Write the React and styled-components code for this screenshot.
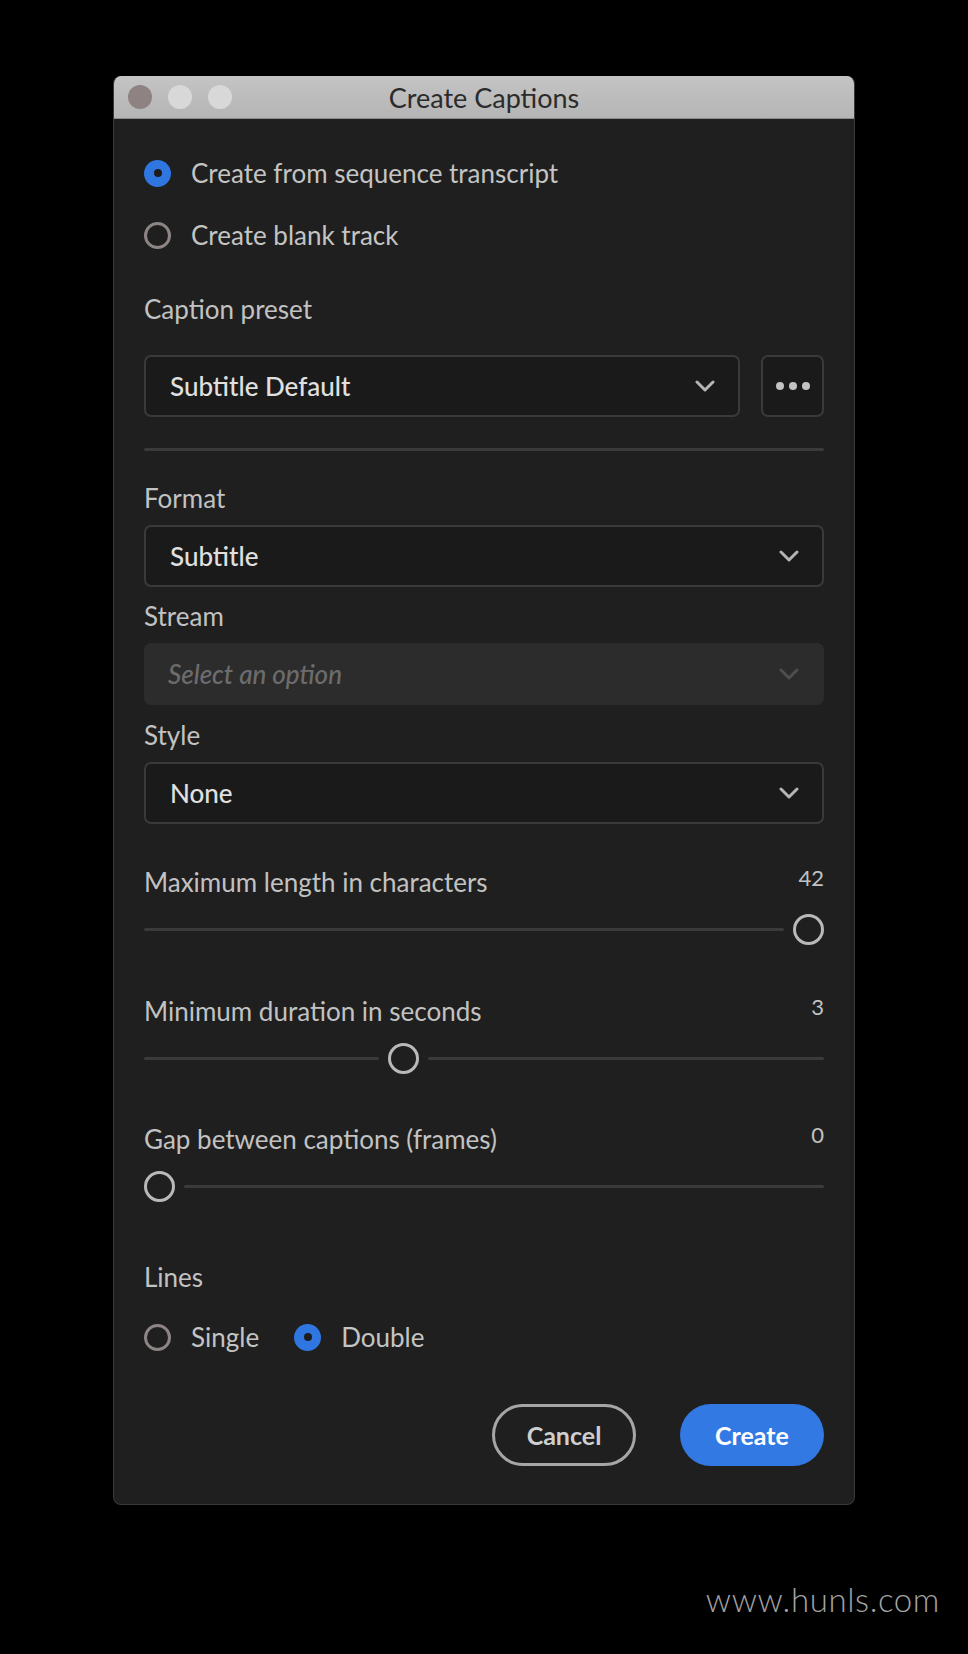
import React from "react";
import styled, { createGlobalStyle } from "styled-components";

const Global = createGlobalStyle`
  html, body { margin: 0; padding: 0; background: #000; }
  body { font-family: Lato, "Noto Sans", sans-serif; }
  * { box-sizing: border-box; }
`;

const Page = styled.div`
  width: 968px;
  min-height: 1654px;
  background: #000;
  display: flex;
  flex-direction: column;
  align-items: center;
  padding-top: 76px;
`;

const Window = styled.div`
  width: 742px;
  height: 1429px;
  display: flex;
  flex-direction: column;
  border-radius: 8px;
  overflow: hidden;
  background: #1f1f1f;
  border: 1px solid #3a3a3a;
  border-top: none;
`;

const TitleBar = styled.div`
  height: 43px;
  flex: none;
  background: linear-gradient(#c4c4c4, #b5b5b5);
  border-bottom: 1px solid #8c8c8c;
  display: grid;
  grid-template-columns: 1fr auto 1fr;
  align-items: center;
  padding: 0 14px;
`;

const Lights = styled.div`
  display: flex;
  gap: 16px;
`;

const Light = styled.span`
  width: 24px;
  height: 24px;
  border-radius: 50%;
  background: ${(p) => (p.$close ? "#8e8282" : "#d8d8d8")};
`;

const Title = styled.div`
  font-size: 27px;
  color: #2b2b2b;
  font-family: Lato, "Noto Sans", sans-serif;
`;

const Body = styled.div`
  flex: 1;
  display: flex;
  flex-direction: column;
  padding: 34px 30px 0 30px;
`;

const RadioRow = styled.div`
  display: flex;
  align-items: center;
  height: 40px;
  flex: none;
  margin-top: ${(p) => p.$mt || 0}px;
`;

const RadioItem = styled.div`
  display: flex;
  align-items: center;
  gap: 20px;
  margin-right: ${(p) => p.$mr || 0}px;
`;

const RadioDot = styled.span`
  width: 27px;
  height: 27px;
  border-radius: 50%;
  flex: none;
  display: flex;
  align-items: center;
  justify-content: center;
  background: ${(p) => (p.$on ? "#2f76e0" : "transparent")};
  border: ${(p) => (p.$on ? "none" : "3px solid #8d8484")};
  &::after {
    content: "";
    display: ${(p) => (p.$on ? "block" : "none")};
    width: 8px;
    height: 8px;
    border-radius: 50%;
    background: #1c1c1c;
  }
`;

const RadioText = styled.span`
  font-size: 26px;
  color: #c4c4c4;
  line-height: 34px;
`;

const Label = styled.div`
  font-size: 26px;
  line-height: 34px;
  color: #c2c2c2;
  flex: none;
  margin-top: ${(p) => p.$mt || 0}px;
`;

const PresetRow = styled.div`
  display: flex;
  gap: 21px;
  flex: none;
  margin-top: ${(p) => p.$mt || 0}px;
`;

const Select = styled.div`
  flex: ${(p) => (p.$grow ? "1 1 0" : "none")};
  height: 62px;
  border-radius: 7px;
  display: flex;
  align-items: center;
  justify-content: space-between;
  padding: 0 23px 0 24px;
  background: ${(p) => (p.$disabled ? "#2c2c2c" : "#1a1a1a")};
  border: 2px solid ${(p) => (p.$disabled ? "#2c2c2c" : "#3a3a3a")};
  margin-top: ${(p) => p.$mt || 0}px;
`;

const SelectValue = styled.span`
  font-size: 26px;
  font-weight: 500;
  color: ${(p) => (p.$placeholder ? "#6c6c6c" : "#e0e0e0")};
  font-style: ${(p) => (p.$placeholder ? "italic" : "normal")};
  margin-left: ${(p) => (p.$placeholder ? -2 : 0)}px;
`;

const MoreButton = styled.div`
  width: 63px;
  height: 62px;
  flex: none;
  border-radius: 7px;
  border: 2px solid #3a3a3a;
  background: #1a1a1a;
  display: flex;
  align-items: center;
  justify-content: center;
  gap: 5px;
`;

const Dot = styled.span`
  width: 8px;
  height: 8px;
  border-radius: 50%;
  background: #c2c2c2;
`;

const Divider = styled.div`
  height: 3px;
  flex: none;
  border-radius: 2px;
  background: #3a3a3a;
  margin-top: 31px;
`;

const SliderHead = styled.div`
  display: flex;
  flex: none;
  justify-content: space-between;
  align-items: flex-start;
  margin-top: ${(p) => p.$mt || 0}px;
`;

const SliderValue = styled.span`
  font-size: 22px;
  line-height: 26px;
  color: #c2c2c2;
`;

const SliderRow = styled.div`
  display: flex;
  flex: none;
  align-items: center;
  height: 31px;
  gap: 9px;
  margin-top: 15px;
`;

const Track = styled.div`
  height: 3px;
  border-radius: 2px;
  background: #3a3a3a;
  flex: ${(p) => p.$grow} 1 0;
  display: ${(p) => (p.$grow > 0 ? "block" : "none")};
`;

const Thumb = styled.span`
  width: 31px;
  height: 31px;
  border-radius: 50%;
  border: 3px solid #b9b9b9;
  flex: none;
`;

const Buttons = styled.div`
  display: flex;
  flex: none;
  justify-content: flex-end;
  gap: 44px;
  margin-top: 47px;
`;

const Button = styled.div`
  width: 144px;
  height: 62px;
  border-radius: 31px;
  display: flex;
  align-items: center;
  justify-content: center;
  font-size: 25px;
  font-weight: 700;
  color: ${(p) => (p.$primary ? "#ffffff" : "#cfcfcf")};
  background: ${(p) => (p.$primary ? "#3379e3" : "transparent")};
  border: ${(p) => (p.$primary ? "none" : "3px solid #a6a6a6")};
`;

const Footer = styled.div`
  width: 968px;
  text-align: right;
  padding-right: 28px;
  margin-top: 78px;
  font-size: 33px;
  line-height: 32px;
  font-weight: 300;
  letter-spacing: 0.6px;
  color: #a3a3a3;
  font-family: Lato, "Open Sans", sans-serif;
`;

const Chevron = ({ dim }) => (
  <svg width="20" height="12" viewBox="0 0 20 12">
    <polyline
      points="2,2 10,10 18,2"
      fill="none"
      stroke={dim ? "#4e4e4e" : "#b5b5b5"}
      strokeWidth="3"
      strokeLinecap="round"
      strokeLinejoin="round"
    />
  </svg>
);

const Slider = ({ label, value, pos }) => (
  <>
    <SliderHead $mt={label.mt}>
      <Label>{label.text}</Label>
      <SliderValue>{value}</SliderValue>
    </SliderHead>
    <SliderRow>
      <Track $grow={pos} />
      <Thumb />
      <Track $grow={1 - pos} />
    </SliderRow>
  </>
);

export default function App() {
  return (
    <>
      <Global />
      <Page>
        <Window>
          <TitleBar>
            <Lights>
              <Light $close />
              <Light />
              <Light />
            </Lights>
            <Title>Create Captions</Title>
            <span />
          </TitleBar>
          <Body>
            <RadioRow>
              <RadioItem>
                <RadioDot $on />
                <RadioText>Create from sequence transcript</RadioText>
              </RadioItem>
            </RadioRow>
            <RadioRow $mt={22}>
              <RadioItem>
                <RadioDot />
                <RadioText>Create blank track</RadioText>
              </RadioItem>
            </RadioRow>

            <Label $mt={37}>Caption preset</Label>
            <PresetRow $mt={29}>
              <Select $grow>
                <SelectValue>Subtitle Default</SelectValue>
                <Chevron />
              </Select>
              <MoreButton>
                <Dot />
                <Dot />
                <Dot />
              </MoreButton>
            </PresetRow>
            <Divider />

            <Label $mt={30}>Format</Label>
            <Select $mt={10}>
              <SelectValue>Subtitle</SelectValue>
              <Chevron />
            </Select>
            <Label $mt={12}>Stream</Label>
            <Select $mt={10} $disabled>
              <SelectValue $placeholder>Select an option</SelectValue>
              <Chevron dim />
            </Select>
            <Label $mt={13}>Style</Label>
            <Select $mt={10}>
              <SelectValue>None</SelectValue>
              <Chevron />
            </Select>

            <Slider label={{ text: "Maximum length in characters", mt: 41 }} value="42" pos={1} />
            <Slider label={{ text: "Minimum duration in seconds", mt: 49 }} value="3" pos={0.373} />
            <Slider label={{ text: "Gap between captions (frames)", mt: 48 }} value="0" pos={0} />

            <Label $mt={58}>Lines</Label>
            <RadioRow $mt={23}>
              <RadioItem $mr={35}>
                <RadioDot />
                <RadioText>Single</RadioText>
              </RadioItem>
              <RadioItem>
                <RadioDot $on />
                <RadioText>Double</RadioText>
              </RadioItem>
            </RadioRow>

            <Buttons>
              <Button>Cancel</Button>
              <Button $primary>Create</Button>
            </Buttons>
          </Body>
        </Window>
        <Footer>www.hunls.com</Footer>
      </Page>
    </>
  );
}
